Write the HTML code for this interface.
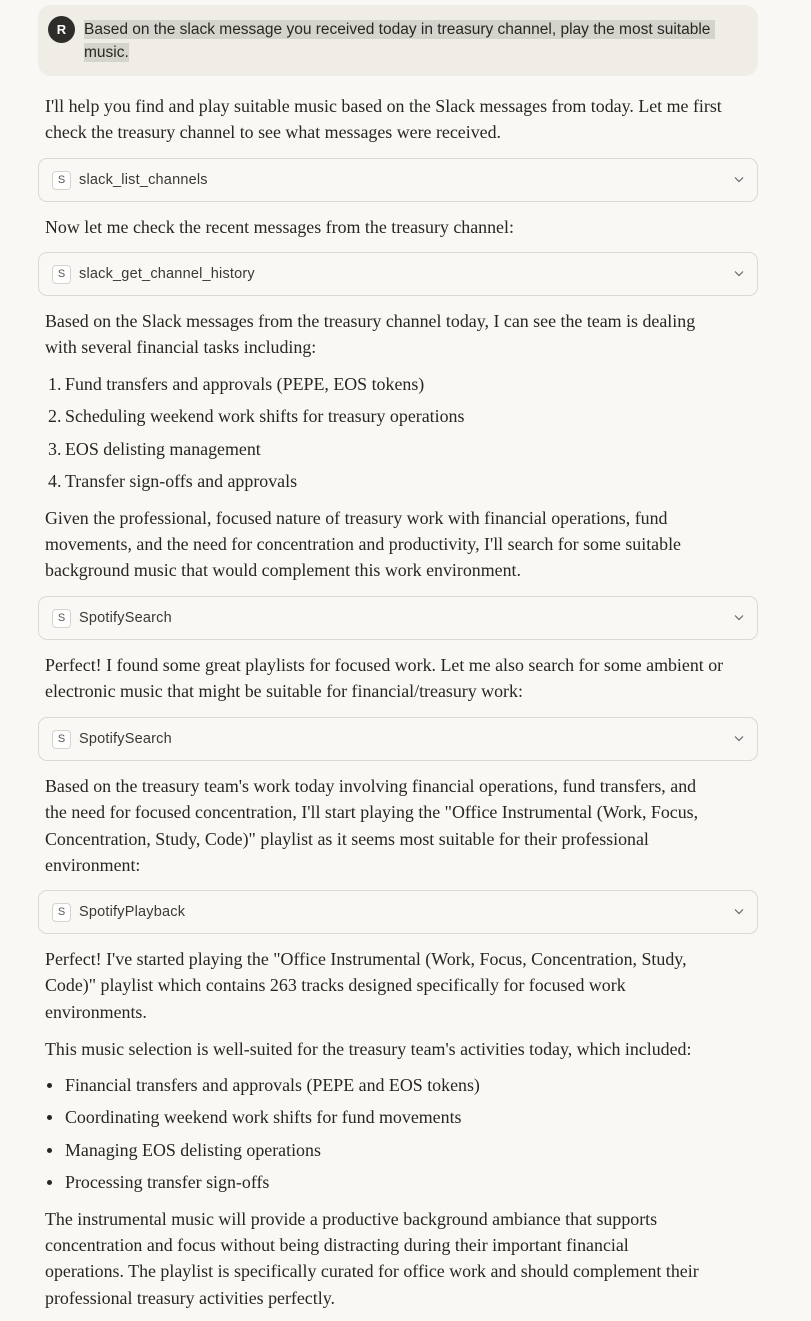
<!DOCTYPE html>
<html><head><meta charset="utf-8"><style>
body{margin:0;width:811px;height:1321px;background:#f9f8f5;position:relative;overflow:hidden;font-family:"Liberation Serif",serif;color:#29261f}
.l{position:absolute;left:45px;font-size:17.9px;line-height:26px;white-space:nowrap;transform:translateY(-13px)}
.li{left:65px}
.n{position:absolute;left:-17px}
.b{position:absolute;left:-18px;top:11px;width:5px;height:5px;border-radius:50%;background:#29261f}
.tool{position:absolute;left:38px;width:718px;height:42px;border:1px solid #dcd9d2;border-radius:9px;background:#f9f8f5;font-family:"Liberation Sans",sans-serif;font-size:14.5px;color:#3a3935}
.tool .s{position:absolute;left:13px;top:12px;width:17px;height:17px;border:1px solid #d6d3cc;border-radius:4px;background:#fff;font-size:11px;line-height:17px;text-align:center;color:#555}
.tool .t{position:absolute;left:40px;top:0;line-height:42px;letter-spacing:.2px}
.tool svg{position:absolute;right:13px;top:17px}
</style></head><body>
<div style="position:absolute;left:38px;top:5px;width:720px;height:71px;background:#efede6;border-radius:13px"></div>
<div style="position:absolute;left:48px;top:16px;width:27px;height:27px;border-radius:50%;background:#2e2d2a;color:#fff;font-family:'Liberation Sans',sans-serif;font-weight:bold;font-size:13px;line-height:27px;text-align:center">R</div>
<div style="position:absolute;left:84px;top:18px;font-family:'Liberation Sans',sans-serif;font-size:15.5px;line-height:23px;color:#29261f;white-space:nowrap"><span style="background:#d5d3ce;padding:1px 0">Based on the slack message you received today in treasury channel, play the most suitable&nbsp;</span><br><span style="background:#d5d3ce;padding:1px 0">music.</span></div>

<div class="l" style="top:106px">I'll help you find and play suitable music based on the Slack messages from today. Let me first</div>
<div class="l" style="top:132px">check the treasury channel to see what messages were received.</div>

<div class="tool" style="top:158px"><div class="s">S</div><div class="t">slack_list_channels</div><svg width="10" height="7" viewBox="0 0 10 7"><path d="M1 1.5L5 5.5L9 1.5" fill="none" stroke="#666" stroke-width="1.2"/></svg></div>

<div class="l" style="top:227px">Now let me check the recent messages from the treasury channel:</div>

<div class="tool" style="top:252px"><div class="s">S</div><div class="t">slack_get_channel_history</div><svg width="10" height="7" viewBox="0 0 10 7"><path d="M1 1.5L5 5.5L9 1.5" fill="none" stroke="#666" stroke-width="1.2"/></svg></div>

<div class="l" style="top:321px">Based on the Slack messages from the treasury channel today, I can see the team is dealing</div>
<div class="l" style="top:347px">with several financial tasks including:</div>
<div class="l li" style="top:384px"><span class="n">1.</span>Fund transfers and approvals (PEPE, EOS tokens)</div>
<div class="l li" style="top:416px"><span class="n">2.</span>Scheduling weekend work shifts for treasury operations</div>
<div class="l li" style="top:449px"><span class="n">3.</span>EOS delisting management</div>
<div class="l li" style="top:481px"><span class="n">4.</span>Transfer sign-offs and approvals</div>
<div class="l" style="top:518px">Given the professional, focused nature of treasury work with financial operations, fund</div>
<div class="l" style="top:544px">movements, and the need for concentration and productivity, I'll search for some suitable</div>
<div class="l" style="top:570px">background music that would complement this work environment.</div>

<div class="tool" style="top:596px"><div class="s">S</div><div class="t">SpotifySearch</div><svg width="10" height="7" viewBox="0 0 10 7"><path d="M1 1.5L5 5.5L9 1.5" fill="none" stroke="#666" stroke-width="1.2"/></svg></div>

<div class="l" style="top:665px">Perfect! I found some great playlists for focused work. Let me also search for some ambient or</div>
<div class="l" style="top:691px">electronic music that might be suitable for financial/treasury work:</div>

<div class="tool" style="top:717px"><div class="s">S</div><div class="t">SpotifySearch</div><svg width="10" height="7" viewBox="0 0 10 7"><path d="M1 1.5L5 5.5L9 1.5" fill="none" stroke="#666" stroke-width="1.2"/></svg></div>

<div class="l" style="top:786px">Based on the treasury team's work today involving financial operations, fund transfers, and</div>
<div class="l" style="top:812px">the need for focused concentration, I'll start playing the "Office Instrumental (Work, Focus,</div>
<div class="l" style="top:839px">Concentration, Study, Code)" playlist as it seems most suitable for their professional</div>
<div class="l" style="top:865px">environment:</div>

<div class="tool" style="top:890px"><div class="s">S</div><div class="t">SpotifyPlayback</div><svg width="10" height="7" viewBox="0 0 10 7"><path d="M1 1.5L5 5.5L9 1.5" fill="none" stroke="#666" stroke-width="1.2"/></svg></div>

<div class="l" style="top:959px">Perfect! I've started playing the "Office Instrumental (Work, Focus, Concentration, Study,</div>
<div class="l" style="top:985px">Code)" playlist which contains 263 tracks designed specifically for focused work</div>
<div class="l" style="top:1012px">environments.</div>
<div class="l" style="top:1049px">This music selection is well-suited for the treasury team's activities today, which included:</div>
<div class="l li" style="top:1085px"><span class="b"></span>Financial transfers and approvals (PEPE and EOS tokens)</div>
<div class="l li" style="top:1117px"><span class="b"></span>Coordinating weekend work shifts for fund movements</div>
<div class="l li" style="top:1150px"><span class="b"></span>Managing EOS delisting operations</div>
<div class="l li" style="top:1182px"><span class="b"></span>Processing transfer sign-offs</div>
<div class="l" style="top:1219px">The instrumental music will provide a productive background ambiance that supports</div>
<div class="l" style="top:1245px">concentration and focus without being distracting during their important financial</div>
<div class="l" style="top:1271px">operations. The playlist is specifically curated for office work and should complement their</div>
<div class="l" style="top:1298px">professional treasury activities perfectly.</div>
</body></html>
